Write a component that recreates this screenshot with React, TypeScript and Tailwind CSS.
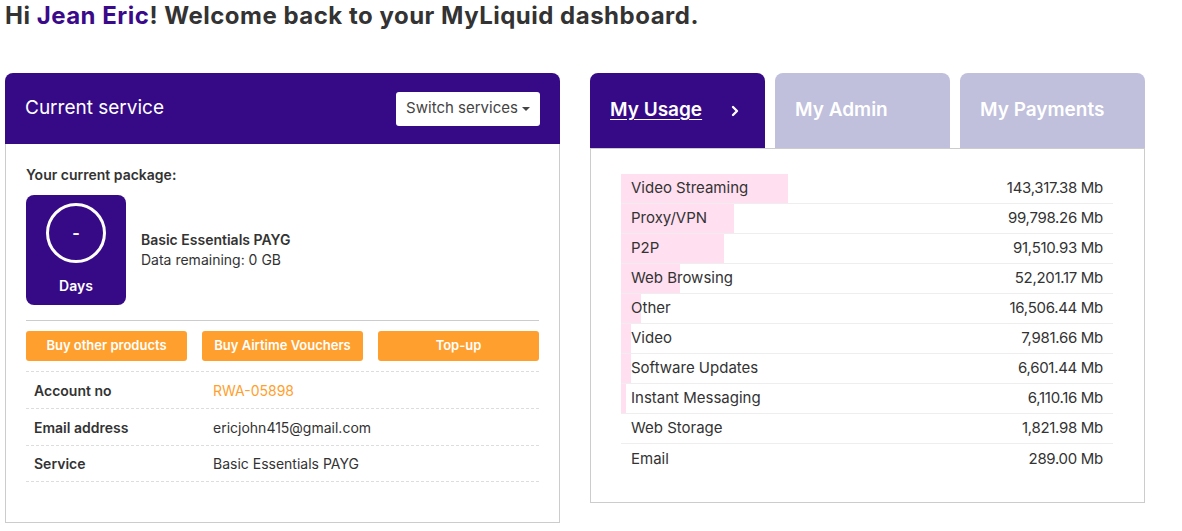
import { ChevronRight } from "lucide-react";

const usage = [
  { name: "Video Streaming", value: 143317.38 },
  { name: "Proxy/VPN", value: 99798.26 },
  { name: "P2P", value: 91510.93 },
  { name: "Web Browsing", value: 52201.17 },
  { name: "Other", value: 16506.44 },
  { name: "Video", value: 7981.66 },
  { name: "Software Updates", value: 6601.44 },
  { name: "Instant Messaging", value: 6110.16 },
  { name: "Web Storage", value: 1821.98 },
  { name: "Email", value: 289.0 },
];

const total = usage.reduce((sum, u) => sum + u.value, 0);

function formatMb(v: number) {
  return (
    v.toLocaleString("en-US", {
      minimumFractionDigits: 2,
      maximumFractionDigits: 2,
    }) + " Mb"
  );
}

function CurrentService() {
  return (
    <div className="w-[555px] shrink-0">
      <div className="h-[71px] bg-[#360a87] rounded-t-[8px] px-5 flex items-center justify-between">
        <span className="text-white text-[19px]">Current service</span>
        <button className="bg-white rounded-[3px] w-[144px] h-[34px] text-[15px] text-[#444] flex items-center justify-center gap-1">
          Switch services
          <span className="w-0 h-0 border-x-[4px] border-x-transparent border-t-[4px] border-t-[#444]" />
        </button>
      </div>

      <div className="border border-t-0 border-[#ccc] px-5 pt-[21px] pb-[40px]">
        <p className="text-[14px] font-semibold text-[#333] leading-5">
          Your current package:
        </p>

        <div className="flex items-center gap-[15px] mt-[10px]">
          <div className="w-[100px] h-[110px] bg-[#360a87] rounded-[8px] flex flex-col items-center pt-[8px]">
            <div className="w-[60px] h-[60px] rounded-full border-[3px] border-white flex items-center justify-center text-white font-bold text-[16px]">
              -
            </div>
            <span className="text-white font-semibold text-[14px] mt-[12px]">
              Days
            </span>
          </div>

          <div className="text-[14px] text-[#333] leading-5">
            <p className="font-semibold">Basic Essentials PAYG</p>
            <p>Data remaining: 0 GB</p>
          </div>
        </div>

        <div className="border-t border-[#ccc] mt-[15px]" />

        <div className="grid grid-cols-3 gap-[15px] mt-[10px]">
          <button className="h-[30px] bg-[#ff9f2e] rounded-[3px] text-white text-[13px] font-semibold">
            Buy other products
          </button>
          <button className="h-[30px] bg-[#ff9f2e] rounded-[3px] text-white text-[13px] font-semibold">
            Buy Airtime Vouchers
          </button>
          <button className="h-[30px] bg-[#ff9f2e] rounded-[3px] text-white text-[13px] font-semibold">
            Top-up
          </button>
        </div>

        <div className="mt-[10px] text-[14px] text-[#333]">
          <div className="flex items-center h-[37px] border-t border-dashed border-[#ddd]">
            <span className="w-[187px] pl-2 font-semibold">Account no</span>
            <span className="text-[#ff9f2e]">RWA-05898</span>
          </div>
          <div className="flex items-center h-[37px] border-t border-dashed border-[#ddd]">
            <span className="w-[187px] pl-2 font-semibold">Email address</span>
            <span>ericjohn415@gmail.com</span>
          </div>
          <div className="flex items-center h-[37px] border-y border-dashed border-[#ddd]">
            <span className="w-[187px] pl-2 font-semibold">Service</span>
            <span>Basic Essentials PAYG</span>
          </div>
        </div>
      </div>
    </div>
  );
}

function UsagePanel() {
  return (
    <div className="w-[555px] shrink-0">
      <div className="flex gap-[10px]">
        <div className="w-[175px] h-[75px] bg-[#360a87] rounded-t-[8px] pl-5 pr-[22px] flex items-center justify-between text-white text-[19px] font-semibold">
          <span className="underline underline-offset-[3px]">My Usage</span>
          <ChevronRight size={16} strokeWidth={3.5} />
        </div>
        <div className="w-[175px] h-[75px] bg-[#c0bfdc] rounded-t-[8px] pl-5 flex items-center text-white text-[19px] font-semibold">
          My Admin
        </div>
        <div className="w-[185px] h-[75px] bg-[#c0bfdc] rounded-t-[8px] pl-5 flex items-center text-white text-[19px] font-semibold">
          My Payments
        </div>
      </div>

      <div className="border border-[#ccc] h-[355px] pt-[25px] pl-[30px] pr-[31px]">
        {usage.map((u, i) => (
          <div
            key={u.name}
            className={`relative h-[30px] flex items-center justify-between px-[10px] text-[15px] text-[#333] ${
              i < usage.length - 1 ? "border-b border-[#eee]" : ""
            }`}
          >
            <div
              className="absolute left-0 top-0 bottom-0 bg-[#ffdff0]"
              style={{ width: `${Math.round((u.value / total) * 100)}%` }}
            />
            <span className="relative">{u.name}</span>
            <span className="relative tracking-[-0.3px]">
              {formatMb(u.value)}
            </span>
          </div>
        ))}
      </div>
    </div>
  );
}

export default function App() {
  return (
    <div className="min-h-screen bg-white px-[5px] font-['Inter',sans-serif]">
      <h1 className="text-[24px] font-bold text-[#333] leading-[32px] tracking-[0.5px]">
        Hi <span className="text-[#3a0a8a]">Jean Eric</span>! Welcome back to
        your MyLiquid dashboard.
      </h1>

      <div className="flex gap-[30px] mt-[41px]">
        <CurrentService />
        <UsagePanel />
      </div>
    </div>
  );
}
